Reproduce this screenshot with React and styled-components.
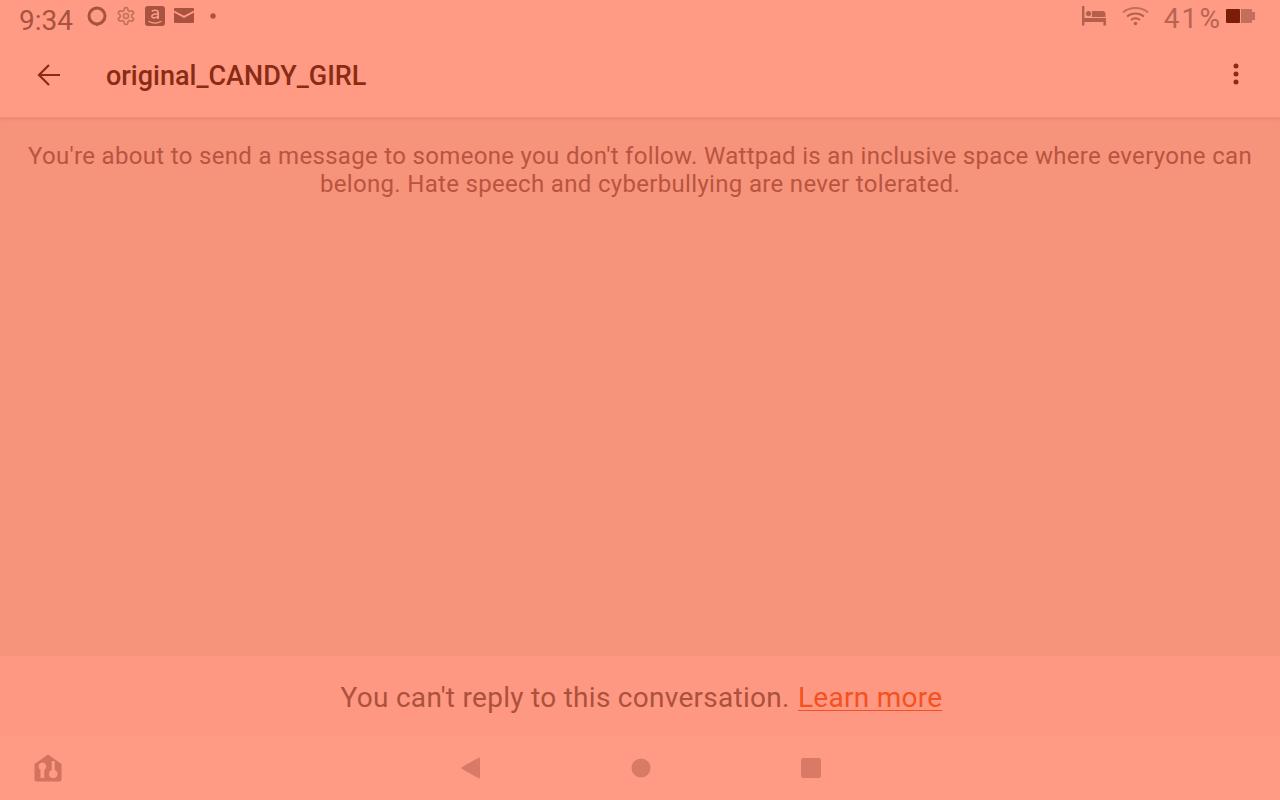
import React from "react"
import styled, { createGlobalStyle } from "styled-components"

const GlobalStyle = createGlobalStyle`
  html, body {
    margin: 0;
    padding: 0;
    background: #ff9b85;
    font-family: Roboto, "Liberation Sans", sans-serif;
  }
`

const Screen = styled.div`
  width: 1280px;
  height: 800px;
  display: flex;
  flex-direction: column;
  overflow: hidden;
  background: #ff9b85;
`

const StatusBar = styled.div`
  height: 36px;
  flex: none;
  display: flex;
  align-items: flex-start;
  justify-content: space-between;
  padding: 0 24px 0 19px;
`

const StatusGroup = styled.div`
  display: flex;
  align-items: flex-start;
`

const Clock = styled.span`
  font-size: 28px;
  line-height: 41px;
  color: #a9523f;
  margin-right: 14px;
`

const StatusIcon = styled.svg`
  display: block;
  flex: none;
  margin-top: ${p => p.$top}px;
  margin-left: ${p => p.$left || 0}px;
`

const Battery = styled.span`
  font-size: 28px;
  line-height: 38px;
  letter-spacing: 2.1px;
  color: #b86450;
  margin-left: 15px;
`

const Header = styled.header`
  height: 78px;
  flex: none;
  display: flex;
  align-items: center;
  padding: 0 41px 3px 36px;
  border-bottom: 1px solid #ec8f7a;
  box-sizing: content-box;
`

const Title = styled.h1`
  flex: 1;
  margin: 2px 0 0 44px;
  font-size: 27px;
  font-weight: 500;
  color: #8a2b14;
`

const BackIcon = styled.svg`
  display: block;
  flex: none;
`

const MoreIcon = styled.svg`
  display: block;
  flex: none;
  margin-bottom: 3px;
`

const Body = styled.main`
  flex: 1;
  padding: 24px 24px 0;
  background: #f6937b;
  box-shadow: inset 0 3px 3px -2px rgba(160, 70, 50, 0.18);
`

const Notice = styled.p`
  margin: 0;
  font-size: 24px;
  line-height: 28px;
  letter-spacing: 0.32px;
  text-align: center;
  color: #b9543f;
`

const ReplyBar = styled.div`
  height: 81px;
  flex: none;
  display: flex;
  align-items: center;
  justify-content: center;
  padding: 1px 0 0 3px;
  box-sizing: border-box;
  background: #fe9882;
  font-size: 28px;
  letter-spacing: 0.28px;
  color: #ac513c;
  white-space: pre;
`

const LearnMore = styled.a`
  color: #f4511e;
  text-decoration: underline;
  text-underline-offset: 3px;
  text-decoration-thickness: 1px;
  margin-left: 1px;
`

const NavBar = styled.nav`
  height: 63px;
  flex: none;
  position: relative;
  display: flex;
  align-items: center;
  justify-content: center;
  gap: 150px;
  padding: 0 0 2px 1px;
  box-sizing: border-box;
`

const HomeShortcut = styled.svg`
  position: absolute;
  left: 33px;
  top: 16px;
`

const NavIcon = styled.svg`
  display: block;
  flex: none;
`

export default function App() {
  return (
    <Screen>
      <GlobalStyle />
      <StatusBar>
        <StatusGroup>
          <Clock>9:34</Clock>
          <StatusIcon $top={6} width="20" height="22" viewBox="0 0 20 22">
            <circle cx="10" cy="10" r="8" fill="none" stroke="#a9523f" strokeWidth="3" />
            <path d="M6.500 17l3.500 3.500 3.500-3.500z" fill="#a9523f" />
          </StatusIcon>
          <StatusIcon $top={6} $left={9} width="20" height="20" viewBox="0 0 24 24" fill="none" stroke="#c2705c" strokeWidth="2">
            <path d="M12.22 2h-.44a2 2 0 0 0-2 2v.18a2 2 0 0 1-1 1.73l-.43.25a2 2 0 0 1-2 0l-.15-.08a2 2 0 0 0-2.73.73l-.22.38a2 2 0 0 0 .73 2.73l.15.1a2 2 0 0 1 1 1.72v.51a2 2 0 0 1-1 1.74l-.15.09a2 2 0 0 0-.73 2.73l.22.38a2 2 0 0 0 2.73.73l.15-.08a2 2 0 0 1 2 0l.43.25a2 2 0 0 1 1 1.73V20a2 2 0 0 0 2 2h.44a2 2 0 0 0 2-2v-.18a2 2 0 0 1 1-1.73l.43-.25a2 2 0 0 1 2 0l.15.08a2 2 0 0 0 2.73-.73l.22-.39a2 2 0 0 0-.73-2.73l-.15-.08a2 2 0 0 1-1-1.74v-.5a2 2 0 0 1 1-1.74l.15-.09a2 2 0 0 0 .73-2.73l-.22-.38a2 2 0 0 0-2.73-.73l-.15.08a2 2 0 0 1-2 0l-.43-.25a2 2 0 0 1-1-1.73V4a2 2 0 0 0-2-2z" />
            <circle cx="12" cy="12" r="3" />
          </StatusIcon>
          <StatusIcon $top={6} $left={9} width="20" height="20" viewBox="0 0 20 20">
            <rect width="20" height="20" rx="3" fill="#a9523f" />
            <path d="M6.800 5.500c1-1.600 6.200-1.900 6.400 1v6.500M13.200 7.800c-4.400 0-6.600.8-6.400 2.700.2 1.900 4.600 1.800 6.400-.6" fill="none" stroke="#ff9b85" strokeWidth="1.600" />
            <path d="M3.500 15.200c3.800 2.200 9.200 2.200 13 0" fill="none" stroke="#ff9b85" strokeWidth="1.200" />
          </StatusIcon>
          <StatusIcon $top={8} $left={9} width="20" height="15" viewBox="0 0 20 15">
            <path d="M1 0h18a1 1 0 0 1 1 1v1.400l-10 5.400L0 2.400V1a1 1 0 0 1 1-1zM0 4.600l10 5.400 10-5.400V14a1 1 0 0 1-1 1H1a1 1 0 0 1-1-1z" fill="#a9523f" />
          </StatusIcon>
          <StatusIcon $top={13} $left={16} width="6" height="6" viewBox="0 0 6 6">
            <circle cx="3" cy="3" r="2.700" fill="#a9523f" />
          </StatusIcon>
        </StatusGroup>
        <StatusGroup>
          <StatusIcon $top={6} width="24" height="20" viewBox="0 0 24 20">
            <path d="M0 0h2.400v12H24v7.600h-2.600V16H2.400v3.600H0z" fill="#b4604c" />
            <circle cx="6.500" cy="7.600" r="2.600" fill="#b4604c" />
            <path d="M10 5h10.500a3 3 0 0 1 3 3v3H10z" fill="#b4604c" />
          </StatusIcon>
          <StatusIcon $top={6} $left={16} width="27" height="20" viewBox="0 0 27 20" fill="none" stroke="#c2705c" strokeWidth="2">
            <path d="M1 6.500C8 .6 19 .6 26 6.500" />
            <path d="M5 10.500c5-4 12-4 17 0" stroke="#b4604c" />
            <path d="M9 14c3-2.200 6-2.200 9 0" stroke="#b4604c" />
            <circle cx="13.500" cy="17.500" r="1.700" fill="#b4604c" stroke="none" />
          </StatusIcon>
          <Battery>41%</Battery>
          <StatusIcon $top={9} $left={4} width="30" height="14" viewBox="0 0 30 14">
            <rect x="0" y="0" width="14" height="14" rx="1" fill="#7a1e0a" />
            <path d="M15 0h10a1 1 0 0 1 1 1v2h3v8h-3v2a1 1 0 0 1-1 1H15z" fill="#c2705c" />
          </StatusIcon>
        </StatusGroup>
      </StatusBar>

      <Header>
        <BackIcon width="26" height="26" viewBox="0 0 26 26" fill="none" stroke="#8a2b14" strokeWidth="2.200">
          <path d="M24 13H3.500M13 3L3 13l10 10" />
        </BackIcon>
        <Title>original_CANDY_GIRL</Title>
        <MoreIcon width="6" height="22" viewBox="0 0 6 22" fill="#8a2b14">
          <circle cx="3" cy="3" r="2.500" />
          <circle cx="3" cy="11" r="2.500" />
          <circle cx="3" cy="19" r="2.500" />
        </MoreIcon>
      </Header>

      <Body>
        <Notice>
          You're about to send a message to someone you don't follow. Wattpad is an inclusive space where everyone can belong. Hate speech and cyberbullying are never tolerated.
        </Notice>
      </Body>

      <ReplyBar>
        You can't reply to this conversation. <LearnMore>Learn more</LearnMore>
      </ReplyBar>

      <NavBar>
        <HomeShortcut width="30" height="30" viewBox="0 0 30 30">
          <path
            fillRule="evenodd"
            d="M15 1.500L28.500 11v15.500a2 2 0 0 1-2 2h-23a2 2 0 0 1-2-2V11zM9.500 9.500a4 4 0 0 0-2 7.400V25h3.800v-8.100a4 4 0 0 0-1.800-7.400zM18.700 8v9a4.300 4.300 0 1 0 3 0V8z"
            fill="#d2735f"
          />
        </HomeShortcut>
        <NavIcon width="20" height="22" viewBox="0 0 20 22">
          <path d="M19 1.500v19a1 1 0 0 1-1.600.8L1 12a1.200 1.200 0 0 1 0-2L17.400.7A1 1 0 0 1 19 1.500z" fill="#d87a66" />
        </NavIcon>
        <NavIcon width="20" height="20" viewBox="0 0 20 20">
          <circle cx="10" cy="10" r="9.500" fill="#d87a66" />
        </NavIcon>
        <NavIcon width="20" height="20" viewBox="0 0 20 20">
          <rect width="20" height="20" rx="2.500" fill="#d87a66" />
        </NavIcon>
      </NavBar>
    </Screen>
  )
}
